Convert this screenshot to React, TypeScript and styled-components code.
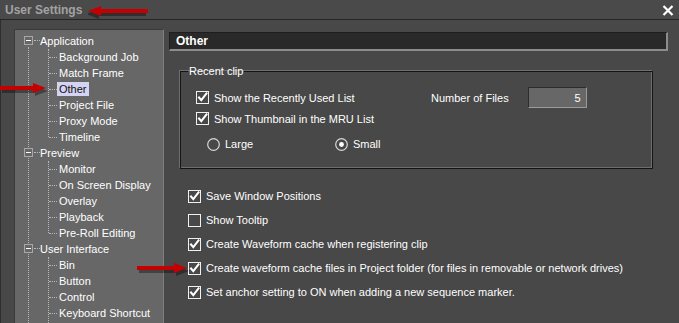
import React from 'react';
import styled, { createGlobalStyle } from 'styled-components';

const GlobalStyle = createGlobalStyle`
  html, body {
    margin: 0;
    padding: 0;
    background: #484848;
  }
  body {
    font-family: "Liberation Sans", Arial, sans-serif;
    font-size: 11px;
  }
`;

type TreeGroup = { title: string; children: string[] };

const tree: TreeGroup[] = [
  {
    title: 'Application',
    children: ['Background Job', 'Match Frame', 'Other', 'Project File', 'Proxy Mode', 'Timeline'],
  },
  {
    title: 'Preview',
    children: ['Monitor', 'On Screen Display', 'Overlay', 'Playback', 'Pre-Roll Editing'],
  },
  {
    title: 'User Interface',
    children: ['Bin', 'Button', 'Control', 'Keyboard Shortcut'],
  },
];

const options = [
  { label: 'Save Window Positions', checked: true },
  { label: 'Show Tooltip', checked: false },
  { label: 'Create Waveform cache when registering clip', checked: true },
  { label: 'Create waveform cache files in Project folder (for files in removable or network drives)', checked: true },
  { label: 'Set anchor setting to ON when adding a new sequence marker.', checked: true },
];

const CheckBox = ({ checked }: { checked: boolean }) => (
  <StyledCheckBox>
    {checked && (
      <svg width="11" height="11" viewBox="0 0 11 11">
        <path d="M2 5.5 L4.3 8.2 L9.5 1.5" fill="none" stroke="#ffffff" strokeWidth="2" strokeLinecap="square" />
      </svg>
    )}
  </StyledCheckBox>
);

const Radio = ({ checked }: { checked: boolean }) => (
  <svg width="13" height="13" viewBox="0 0 13 13">
    <circle cx="6.5" cy="6.5" r="5.8" fill="none" stroke="#d8d8d8" strokeWidth="1.2" />
    {checked && <circle cx="6.5" cy="6.5" r="2.4" fill="#ffffff" />}
  </svg>
);

const Arrow = ({ dir, width }: { dir: 'left' | 'right'; width: number }) => (
  <svg width={width + 4} height="16" viewBox={`0 0 ${width + 4} 16`}>
    <g transform={dir === 'left' ? `translate(${width}, 0) scale(-1, 1)` : undefined}>
      <g opacity="0.35" transform="translate(2, 3)">
        <rect x="0" y="5" width={width - 11} height="4" fill="#000" />
        <path d={`M${width - 13} 2 L${width} 7 L${width - 13} 12 Z`} fill="#000" />
      </g>
      <rect x="0" y="5" width={width - 11} height="4" fill="#c40000" />
      <path d={`M${width - 13} 2 L${width} 7 L${width - 13} 12 Z`} fill="#c40000" />
    </g>
  </svg>
);

const App = () => {
  return (
    <>
      <GlobalStyle />
      <StyledDialog>
        <StyledTitleBar>
          <StyledTitle>User Settings</StyledTitle>
          <StyledClose>
            <svg width="12" height="11" viewBox="0 0 12 11">
              <path d="M1.5 1 L10.5 10 M10.5 1 L1.5 10" stroke="#ffffff" strokeWidth="2.2" />
            </svg>
          </StyledClose>
        </StyledTitleBar>
        <StyledBody>
          <StyledTreePanel>
            {tree.map((group) => (
              <StyledGroup key={group.title}>
                <StyledParentRow>
                  <StyledExpander />
                  <StyledParentLabel>{group.title}</StyledParentLabel>
                </StyledParentRow>
                <StyledChildList>
                  {group.children.map((child) => (
                    <StyledChildRow key={child}>
                      <StyledChildLabel selected={child === 'Other'}>{child}</StyledChildLabel>
                    </StyledChildRow>
                  ))}
                </StyledChildList>
              </StyledGroup>
            ))}
          </StyledTreePanel>
          <StyledContent>
            <StyledHeader>Other</StyledHeader>
            <StyledFieldset>
              <StyledLegend>Recent clip</StyledLegend>
              <StyledClipRow>
                <StyledOption>
                  <CheckBox checked />
                  <span>Show the Recently Used List</span>
                </StyledOption>
                <StyledNumberField>
                  <span>Number of Files</span>
                  <StyledInput>5</StyledInput>
                </StyledNumberField>
              </StyledClipRow>
              <StyledClipRow>
                <StyledOption>
                  <CheckBox checked />
                  <span>Show Thumbnail in the MRU List</span>
                </StyledOption>
              </StyledClipRow>
              <StyledRadioRow>
                <StyledRadioOption width={128}>
                  <Radio checked={false} />
                  <span>Large</span>
                </StyledRadioOption>
                <StyledRadioOption width={100}>
                  <Radio checked />
                  <span>Small</span>
                </StyledRadioOption>
              </StyledRadioRow>
            </StyledFieldset>
            <StyledOptionList>
              {options.map((opt) => (
                <StyledListRow key={opt.label}>
                  <CheckBox checked={opt.checked} />
                  <span>{opt.label}</span>
                </StyledListRow>
              ))}
            </StyledOptionList>
          </StyledContent>
        </StyledBody>
        <StyledAnnotation style={{ left: 88, top: 4 }}>
          <Arrow dir="left" width={60} />
        </StyledAnnotation>
        <StyledAnnotation style={{ left: 0, top: 81 }}>
          <Arrow dir="right" width={46} />
        </StyledAnnotation>
        <StyledAnnotation style={{ left: 137, top: 261 }}>
          <Arrow dir="right" width={50} />
        </StyledAnnotation>
      </StyledDialog>
    </>
  );
};

export default App;

const StyledDialog = styled.div`
  position: relative;
  width: 679px;
  height: 323px;
  overflow: hidden;
  background: #484848;
  color: #ffffff;
`;

const StyledTitleBar = styled.div`
  height: 19px;
  display: flex;
  align-items: center;
  justify-content: space-between;
  padding: 0 5px;
  background: #4a4a4a;
  border-bottom: 1px solid #262626;
`;

const StyledTitle = styled.div`
  font-weight: bold;
  font-size: 12px;
  color: #a2a2a2;
  padding-top: 1px;
`;

const StyledClose = styled.div`
  display: flex;
  padding-top: 1px;
`;

const StyledBody = styled.div`
  display: flex;
  gap: 5px;
  height: 303px;
  padding: 9px 0 0 13px;
  border-left: 1px solid #2e2e2e;
  box-sizing: border-box;
`;

const StyledTreePanel = styled.div`
  position: relative;
  width: 150px;
  flex: none;
  background: #676767;
  border-top: 1px solid #3a3a3a;
  border-left: 1px solid #3a3a3a;
  border-right: 1px solid #7e7e7e;
  padding-top: 3px;
  box-sizing: border-box;
  height: 320px;

  &::before {
    content: '';
    position: absolute;
    left: 13px;
    top: 17px;
    bottom: 0;
    border-left: 1px dotted #b8b8b8;
  }
`;

const StyledGroup = styled.div`
  position: relative;

  &:last-child > div:last-child::before {
    bottom: -20px;
  }
`;

const StyledParentRow = styled.div`
  position: relative;
  height: 16px;
  display: flex;
  align-items: center;
`;

const StyledExpander = styled.div`
  position: absolute;
  left: 9px;
  top: 3px;
  width: 7px;
  height: 7px;
  border: 1px solid #a8a8a8;
  background: #676767;
  z-index: 1;

  &::before {
    content: '';
    position: absolute;
    left: 1px;
    top: 3px;
    width: 5px;
    height: 1px;
    background: #ffffff;
  }

  &::after {
    content: '';
    position: absolute;
    left: 9px;
    top: 3px;
    width: 6px;
    border-top: 1px dotted #b8b8b8;
  }
`;

const StyledParentLabel = styled.span`
  padding-left: 25px;
  font-size: 11px;
  color: #ffffff;
`;

const StyledChildList = styled.div`
  position: relative;

  &::before {
    content: '';
    position: absolute;
    left: 33px;
    top: 0;
    bottom: 8px;
    border-left: 1px dotted #b8b8b8;
  }
`;

const StyledChildRow = styled.div`
  position: relative;
  height: 16px;
  display: flex;
  align-items: center;
  padding-left: 42px;

  &::before {
    content: '';
    position: absolute;
    left: 34px;
    top: 8px;
    width: 8px;
    border-top: 1px dotted #b8b8b8;
  }
`;

const StyledChildLabel = styled.span<{ selected?: boolean }>`
  padding: 1px 2px;
  color: ${(p) => (p.selected ? '#111111' : '#ffffff')};
  background: ${(p) => (p.selected ? '#d4d4f2' : 'transparent')};
`;

const StyledContent = styled.div`
  width: 499px;
  flex: none;
  padding-top: 3px;
`;

const StyledHeader = styled.div`
  height: 19px;
  box-sizing: border-box;
  display: flex;
  align-items: center;
  padding-left: 6px;
  background: #292929;
  border-top: 1px solid #1e1e1e;
  border-left: 1px solid #1e1e1e;
  border-right: 2px solid #8c8c8c;
  border-bottom: 2px solid #8c8c8c;
  font-weight: bold;
  font-size: 12px;
  color: #ffffff;
`;

const StyledFieldset = styled.fieldset`
  margin: 14px 0 0 11px;
  width: 473px;
  height: 104px;
  box-sizing: border-box;
  border: 1px solid #141414;
  box-shadow: inset -1px -1px 0 #6e6e6e, -1px -1px 0 #6e6e6e;
  padding: 10px 0 0 15px;
`;

const StyledLegend = styled.legend`
  padding: 0 1px;
  margin-left: -8px;
  color: #ffffff;
  font-size: 11px;
`;

const StyledClipRow = styled.div`
  height: 21px;
  display: flex;
  align-items: center;
`;

const StyledOption = styled.label`
  display: flex;
  align-items: center;
  gap: 5px;
  width: 235px;
  color: #ffffff;
`;

const StyledCheckBox = styled.span`
  width: 13px;
  height: 13px;
  box-sizing: border-box;
  border: 1px solid #f0f0f0;
  display: flex;
  align-items: center;
  justify-content: center;
  flex: none;
`;

const StyledNumberField = styled.div`
  display: flex;
  align-items: center;
  gap: 19px;
`;

const StyledInput = styled.div`
  width: 59px;
  height: 21px;
  box-sizing: border-box;
  background: #676767;
  border-top: 1px solid #2c2c2c;
  border-left: 1px solid #2c2c2c;
  border-bottom: 1px solid #9a9a9a;
  border-right: 1px solid #9a9a9a;
  display: flex;
  align-items: center;
  justify-content: flex-end;
  padding-right: 5px;
`;

const StyledRadioRow = styled.div`
  height: 30px;
  display: flex;
  align-items: center;
  padding-left: 11px;
`;

const StyledRadioOption = styled.label<{ width: number }>`
  display: flex;
  align-items: center;
  gap: 5px;
  width: ${(p) => p.width}px;
`;

const StyledOptionList = styled.div`
  display: flex;
  flex-direction: column;
  padding: 15px 0 0 19px;
`;

const StyledListRow = styled.label`
  height: 24px;
  display: flex;
  align-items: center;
  gap: 5px;
  color: #ffffff;
  white-space: nowrap;
`;

const StyledAnnotation = styled.div`
  position: absolute;
  pointer-events: none;
  display: flex;
`;
